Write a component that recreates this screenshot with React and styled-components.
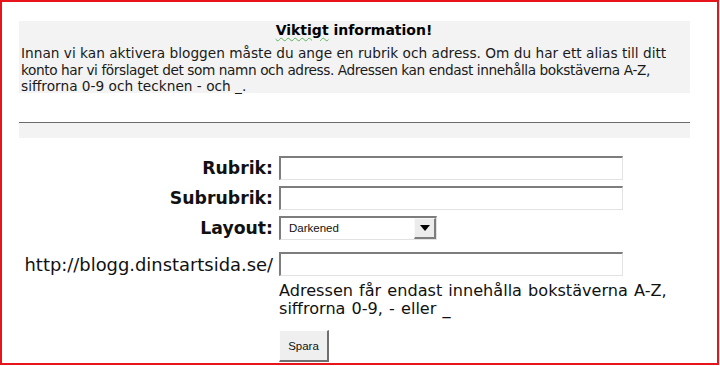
import React from "react";
import styled, { createGlobalStyle } from "styled-components";

const GlobalStyle = createGlobalStyle`
  html, body {
    margin: 0;
    padding: 0;
    background: #fff;
  }
  body {
    font-family: "DejaVu Sans", Verdana, sans-serif;
    color: #000;
  }
`;

const Frame = styled.div`
  box-sizing: border-box;
  width: 719px;
  height: 365px;
  border: 2px solid #e8141b;
  padding: 19px 0 0 17px;
  overflow: hidden;
`;

const InfoBox = styled.section`
  box-sizing: border-box;
  width: 671px;
  height: 72px;
  background: #f3f3f3;
  padding: 0 3px 0 2px;
`;

const InfoTitle = styled.h3`
  margin: 0 0 6px;
  text-align: center;
  font-size: 14px;
  font-weight: bold;
  line-height: 18px;
`;

const Squiggle = styled.span`
  text-decoration: underline wavy #5bb55b;
  text-decoration-thickness: 1px;
  text-underline-offset: 2px;
`;

const InfoText = styled.p`
  margin: 0;
  font-size: 13.7px;
  line-height: 16.5px;
  color: #1a1a1a;
  white-space: nowrap;
`;

const InfoLine = styled.span`
  display: block;
  letter-spacing: ${({ tight }) => (tight ? "-0.42px" : "0")};
`;

const Divider = styled.div`
  width: 671px;
  height: 15px;
  margin-top: 29px;
  border-top: 1px solid #6b6b6b;
  background: #f3f3f3;
`;

const Form = styled.form`
  display: grid;
  grid-template-columns: 254px 1fr;
  column-gap: 6px;
  margin: 18px 0 0 0;
  align-items: center;
`;

const Label = styled.label`
  text-align: right;
  font-size: ${({ plain }) => (plain ? "17.9px" : "17.3px")};
  font-weight: ${({ plain }) => (plain ? "normal" : "bold")};
  white-space: nowrap;
  margin-top: ${({ top }) => top || 0}px;
  color: #111;
`;

const Field = styled.div`
  margin-top: ${({ top }) => top || 0}px;
  position: relative;
  width: ${({ width }) => width || 344}px;
  height: 24px;
`;

const TextInput = styled.input`
  box-sizing: border-box;
  width: 100%;
  height: 100%;
  margin: 0;
  border-style: solid;
  border-width: 2px 1px 1px 2px;
  border-color: #7d7d7d #e2e2e2 #e2e2e2 #7d7d7d;
  background: #fff;
  outline: none;
  padding: 0 3px;
`;

const Select = styled.select`
  box-sizing: border-box;
  width: 100%;
  height: 100%;
  margin: 0;
  appearance: none;
  border-style: solid;
  border-width: 2px 1px 1px 2px;
  border-color: #7d7d7d #e2e2e2 #e2e2e2 #7d7d7d;
  background: #fff;
  font-family: "Liberation Sans", Arial, sans-serif;
  font-size: 11.5px;
  padding: 0 0 2px 8px;
  color: #111;
  outline: none;
`;

const DropButton = styled.span`
  position: absolute;
  top: 2px;
  right: 1px;
  bottom: 1px;
  width: 22px;
  box-sizing: border-box;
  background: #ececec;
  border-style: solid;
  border-width: 1px 2px 2px 1px;
  border-color: #f8f8f8 #7d7d7d #7d7d7d #f8f8f8;
  display: flex;
  align-items: center;
  justify-content: center;
  pointer-events: none;
`;

const Help = styled.div`
  grid-column: 2;
  margin-top: 6px;
  font-size: 16.1px;
  line-height: 18px;
  color: #111;
  width: 420px;
  word-spacing: 1px;
`;

const SaveButton = styled.button`
  grid-column: 2;
  justify-self: start;
  margin-top: 12px;
  width: 50px;
  height: 32px;
  box-sizing: border-box;
  background: #efefef;
  border-style: solid;
  border-width: 1px 2px 2px 1px;
  border-color: #fdfdfd #6f6f6f #6f6f6f #fdfdfd;
  font-family: "Liberation Sans", Arial, sans-serif;
  font-size: 11.5px;
  color: #111;
  padding: 0;
`;

export default function App() {
  return (
    <>
      <GlobalStyle />
      <Frame>
        <InfoBox>
          <InfoTitle>
            <Squiggle>Viktigt</Squiggle> information!
          </InfoTitle>
          <InfoText>
            <InfoLine>
              Innan vi kan aktivera bloggen måste du ange en rubrik och adress. Om du har ett alias till ditt
            </InfoLine>
            <InfoLine tight>
              konto har vi förslaget det som namn och adress. Adressen kan endast innehålla bokstäverna A-Z,
            </InfoLine>
            <InfoLine>siffrorna 0-9 och tecknen - och _.</InfoLine>
          </InfoText>
        </InfoBox>
        <Divider />
        <Form onSubmit={(e) => e.preventDefault()}>
          <Label htmlFor="rubrik">Rubrik:</Label>
          <Field>
            <TextInput id="rubrik" type="text" />
          </Field>

          <Label htmlFor="subrubrik" top={6}>Subrubrik:</Label>
          <Field top={6}>
            <TextInput id="subrubrik" type="text" />
          </Field>

          <Label htmlFor="layout" top={6}>Layout:</Label>
          <Field top={6} width={158}>
            <Select id="layout" defaultValue="darkened">
              <option value="darkened">Darkened</option>
            </Select>
            <DropButton>
              <svg width="10" height="6" viewBox="0 0 10 6">
                <path d="M0 0h10L5 6z" fill="#000" />
              </svg>
            </DropButton>
          </Field>

          <Label htmlFor="adress" plain top={12}>http://blogg.dinstartsida.se/</Label>
          <Field top={12}>
            <TextInput id="adress" type="text" />
          </Field>

          <Help>Adressen får endast innehålla bokstäverna A-Z, siffrorna 0-9, - eller _</Help>
          <SaveButton type="submit">Spara</SaveButton>
        </Form>
      </Frame>
    </>
  );
}
